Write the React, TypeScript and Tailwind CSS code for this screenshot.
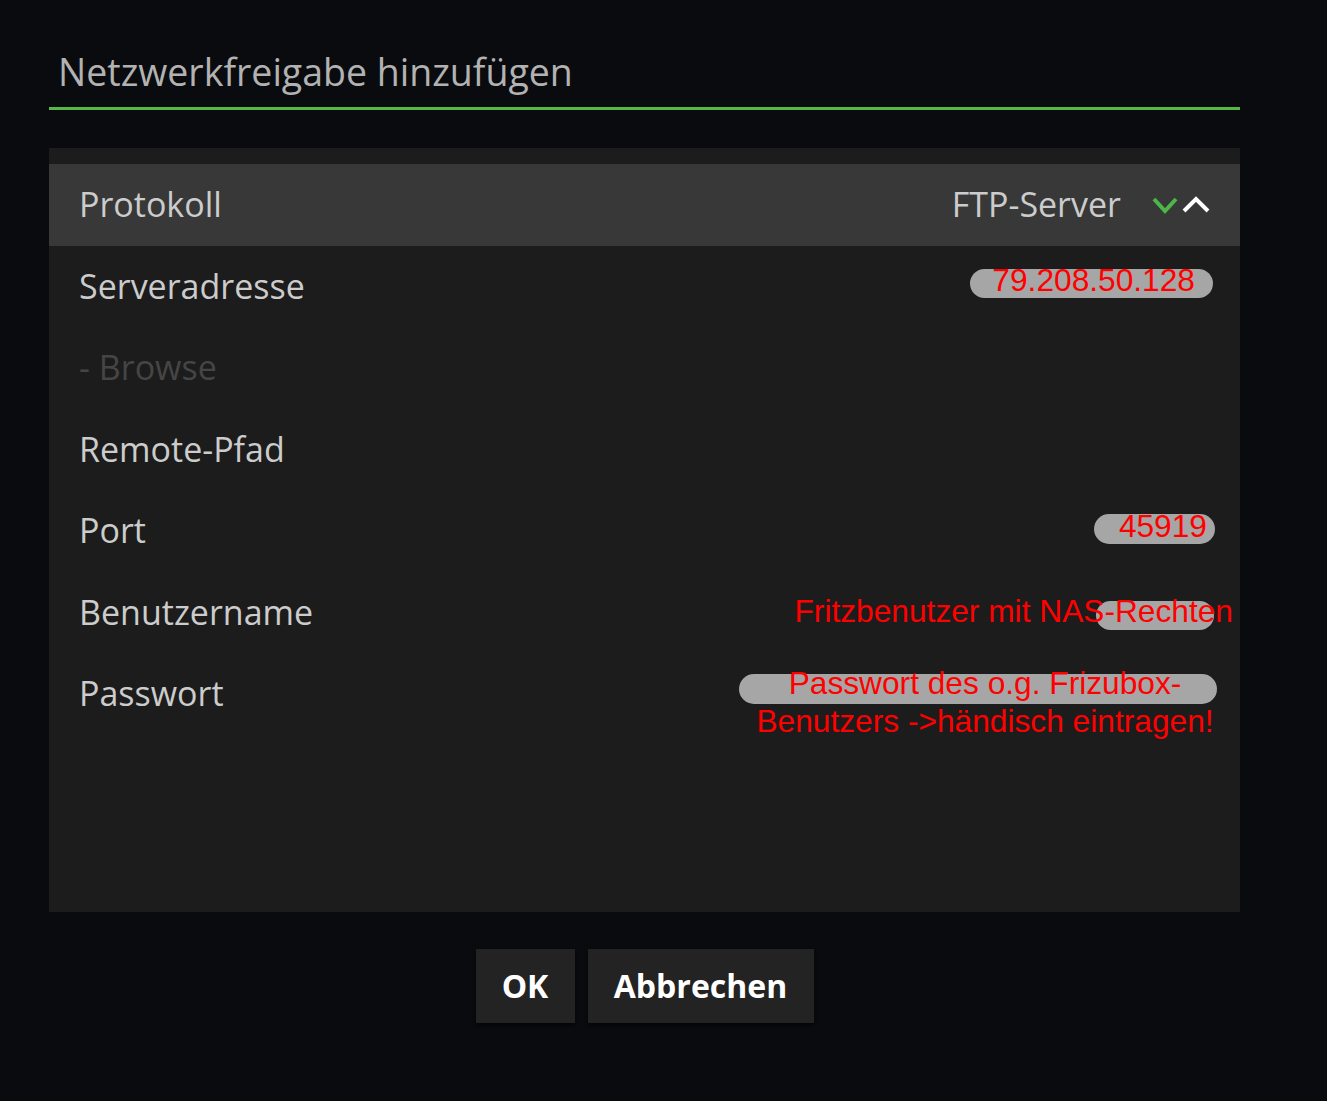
import React from 'react'

type Row = { label: string; value?: string; dim?: boolean; active?: boolean }

const rows: Row[] = [
    { label: 'Protokoll', value: 'FTP-Server', active: true },
    { label: 'Serveradresse' },
    { label: '- Browse', dim: true },
    { label: 'Remote-Pfad' },
    { label: 'Port' },
    { label: 'Benutzername' },
    { label: 'Passwort' },
]

const Chevrons: React.FC = () => (
    <svg width="62" height="22" viewBox="0 0 62 22" className="ml-[30px]">
        <path d="M3 5 L14 17 L25 5" fill="none" stroke="#4cb648" strokeWidth="4" />
        <path d="M33 17 L45 5 L57 17" fill="none" stroke="#ffffff" strokeWidth="4" />
    </svg>
)

// red scribbles drawn on top of the screenshot
const Note: React.FC<{ idx: number }> = ({ idx }) => {
    const red = "absolute text-[#ff0000] text-[31.7px] leading-[32px] whitespace-nowrap"
    const pill = "absolute bg-[#a6a6a6] rounded-full"
    if (idx === 1) return (
        <>
            <div className={`${pill} top-[23.5px] right-[27px] w-[243px] h-[29px]`}></div>
            <div className={`${red} top-[18.5px] right-[45px]`}>79.208.50.128</div>
        </>
    )
    if (idx === 4) return (
        <>
            <div className={`${pill} top-[24px] right-[25px] w-[121px] h-[30px]`}></div>
            <div className={`${red} top-[20px] right-[33px]`}>45919</div>
        </>
    )
    if (idx === 5) return (
        <>
            <div className={`${pill} top-[29.5px] right-[26px] w-[118px] h-[29px]`}></div>
            <div className={`${red} top-[23.5px] right-[7px]`}>Fritzbenutzer mit NAS-Rechten</div>
        </>
    )
    if (idx === 6) return (
        <>
            <div className={`${pill} top-[21px] right-[23px] w-[478px] h-[30px]`}></div>
            <div className="absolute top-[11px] right-[5px] w-[500px] text-center text-[#ff0000] text-[31.7px] leading-[38px]">
                Passwort des o.g. Frizubox-<br />Benutzers -&gt;händisch eintragen!
            </div>
        </>
    )
    return null
}

const App: React.FC = () => {
    return (
        <div className="min-h-screen w-full bg-[#0a0b0e] pl-[49px]" style={{ fontFamily: '"Open Sans", "Noto Sans", sans-serif' }}>
            <div className="w-[1191px]">
                <div className="h-[110px] border-b-[3px] border-[#58b646] pl-[9px] pt-[53px]">
                    <div className="text-[37.5px] leading-none text-[#b2b2b2]">Netzwerkfreigabe hinzufügen</div>
                </div>

                <div className="mt-[38px] h-[764px] bg-[#1c1c1c] pt-[16px]">
                    {rows.map((r, i) => (
                        <div key={r.label}
                            className={`relative h-[81.5px] flex items-center justify-between pl-[30px] pr-[27px] ${r.active ? 'bg-[#383838]' : ''}`}>
                            <span className={`text-[34px] ${r.dim ? 'text-[#454545]' : 'text-[#cccccc]'}`}>{r.label}</span>
                            {r.value &&
                                <div className="flex items-center">
                                    <span className="text-[34px] text-[#cccccc]">{r.value}</span>
                                    <Chevrons />
                                </div>
                            }
                            <div className="absolute inset-0 pointer-events-none" style={{ fontFamily: '"Liberation Sans", Arial, sans-serif' }}>
                                <Note idx={i} />
                            </div>
                        </div>
                    ))}
                </div>

                <div className="mt-[37px] flex justify-center gap-[13px]">
                    <button className="w-[99px] h-[74px] bg-[#232323] text-white font-bold text-[32px] shadow-[0_2px_3px_rgba(0,0,0,0.6)]">OK</button>
                    <button className="w-[226px] h-[74px] bg-[#232323] text-white font-bold text-[32px] shadow-[0_2px_3px_rgba(0,0,0,0.6)]">Abbrechen</button>
                </div>
            </div>
        </div>
    )
}

export default App
